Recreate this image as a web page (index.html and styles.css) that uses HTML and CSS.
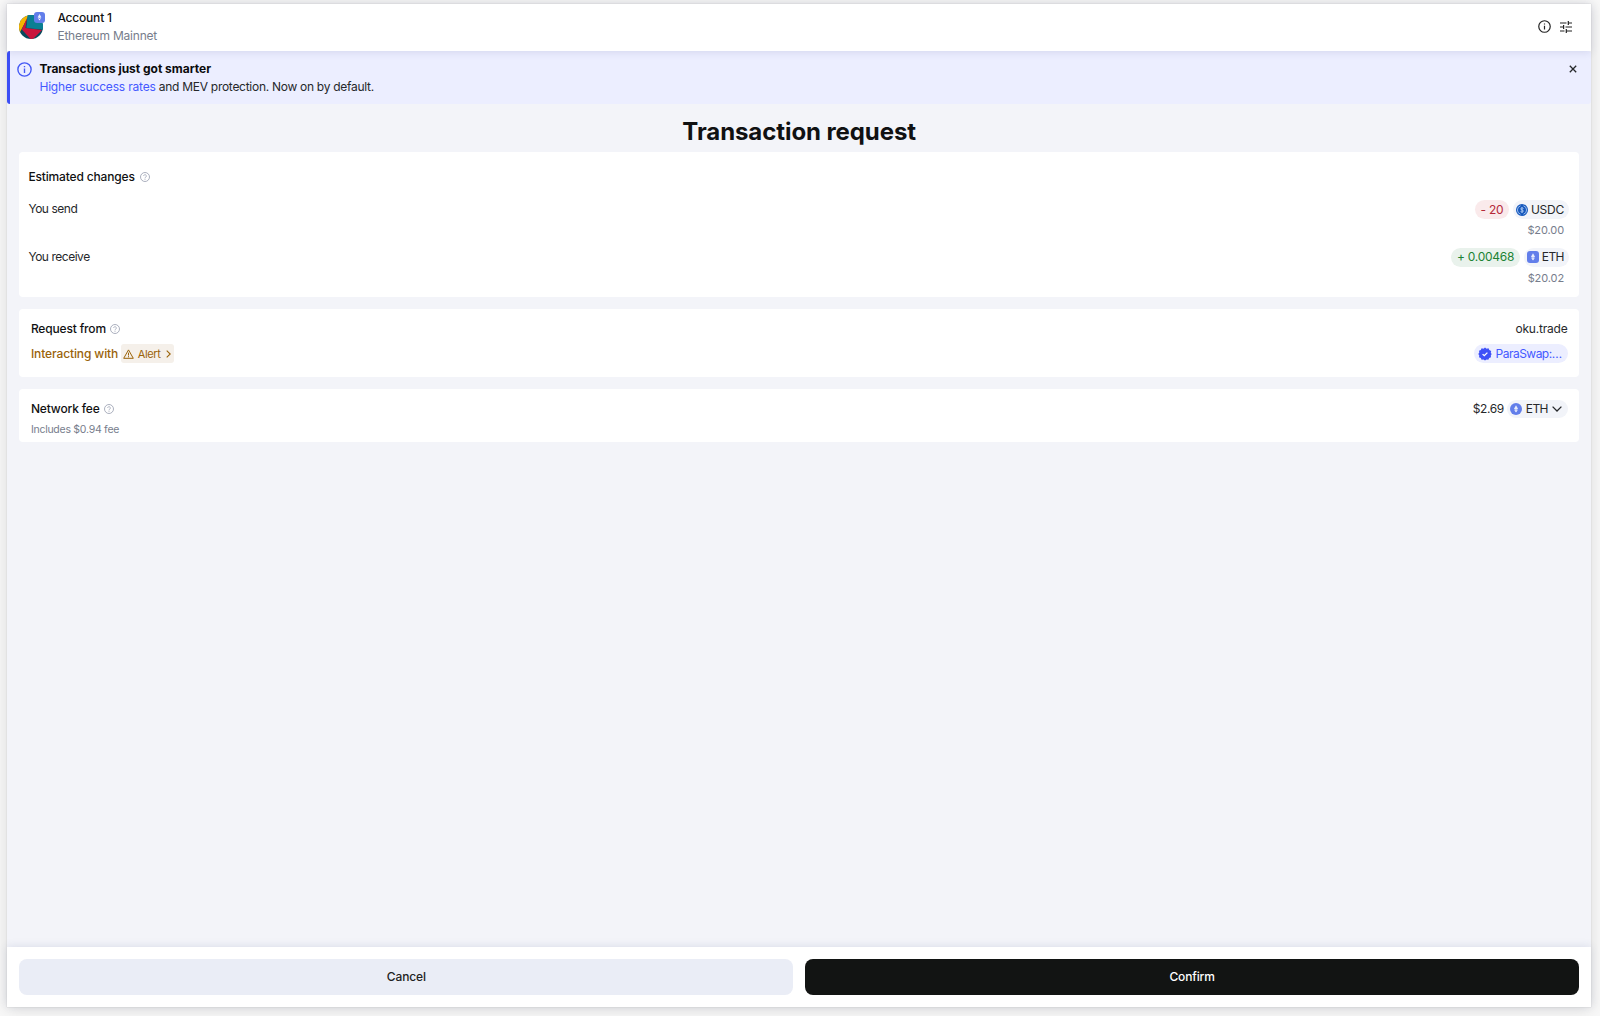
FILE: index.html
```html
<!DOCTYPE html>
<html lang="en">
<head>
<meta charset="utf-8">
<title>Transaction request</title>
<link rel="stylesheet" href="styles.css">
</head>
<body>
<svg class="defs" aria-hidden="true">
  <symbol id="info" viewBox="0 0 24 24"><circle cx="12" cy="12" r="10.6" fill="none" stroke="currentColor" stroke-width="2.200"/><path d="M12 10.500v7M12 6.300v2.200" stroke="currentColor" stroke-width="2.200"/></symbol>
  <symbol id="help" viewBox="0 0 24 24"><circle cx="12" cy="12" r="10.8" fill="none" stroke="currentColor" stroke-width="2.200"/><path d="M8.800 9.600a3.200 3.200 0 1 1 5.200 2.500c-1.300 1-2 1.400-2 3M12 16.600v2.100" fill="none" stroke="currentColor" stroke-width="2.100"/></symbol>
  <symbol id="eth" viewBox="0 0 12 12"><path d="M6 2.200 8 5.700 6 6.900 4 5.700z" fill="#fff" opacity=".85"/><path d="M4 6.400 6 9.400l2-3-2 1.200z" fill="#fff"/></symbol>
</svg>
<main class="panel">
  <header class="topbar">
    <div class="avatar">
      <svg viewBox="0 0 24 24" width="24" height="24"><defs><clipPath id="disc"><circle cx="12" cy="12" r="12"/></clipPath></defs>
        <g clip-path="url(#disc)"><path d="M0 0h24v24H0z" fill="#074a5c"/><path d="M0 0h10L0 19z" fill="#f5b400"/><path d="M8.500 0H24v14.500L7.500 13z" fill="#0a7f93"/><path d="M8 3 6.500 13 23 15 14 24H11.500L2.800 14.500z" fill="#c8143c"/><path d="M9 0H24v14.300L7.600 12.500z" fill="#0a7f93"/></g></svg>
      <span class="network"><svg width="11" height="11"><use href="#eth"/></svg></span>
    </div>
    <div class="account"><div class="name">Account 1</div><div class="chain">Ethereum Mainnet</div></div>
    <div class="tools">
      <svg width="13" height="13"><use href="#info"/></svg>
      <svg width="12" height="12" viewBox="0 0 12 12" fill="none" stroke="currentColor" stroke-width="1.200"><path d="M0 2h6.500M8.500 2H12M8.300 0v4M0 6h3.500M5.500 6H12M3.600 4v4M0 10h4.500M6.500 10H12M6.300 8v4"/></svg>
    </div>
  </header>
  <section class="banner">
    <svg class="banner-icon" width="15" height="15"><use href="#info"/></svg>
    <div class="banner-text"><div class="banner-title">Transactions just got smarter</div><div class="banner-line"><a>Higher success rates</a><span> and MEV protection. Now on by default.</span></div></div>
    <svg class="close" width="8" height="8" viewBox="0 0 8 8"><path d="M.8.8l6.400 6.400M7.200.8.8 7.200" stroke="currentColor" stroke-width="1.300"/></svg>
  </section>
  <h1 class="title">Transaction request</h1>
  <div class="cards">
    <section class="card changes">
      <div class="row heading"><span class="label">Estimated changes</span><svg class="help" width="10" height="10"><use href="#help"/></svg></div>
      <div class="row"><span class="side">You send</span><div class="amounts"><span class="pill minus">- 20</span><span class="pill token"><svg width="12" height="12" viewBox="0 0 12 12"><circle cx="6" cy="6" r="6" fill="#1659bd"/><path d="M4.500 1.800a4.400 4.400 0 0 0 0 8.400M7.500 1.800a4.400 4.400 0 0 1 0 8.400M7.400 4.600C7 3.500 4.700 3.700 4.700 4.900c0 1.400 2.700.7 2.700 2.100C7.400 8.300 5 8.500 4.600 7.300M6 3v6" fill="none" stroke="#cfe2ff" stroke-width=".7"/></svg><span>USDC</span></span></div></div>
      <div class="fiat">$20.00</div>
      <div class="row"><span class="side">You receive</span><div class="amounts"><span class="pill plus">+ 0.00468</span><span class="pill token"><svg class="eth square" width="12" height="12"><use href="#eth"/></svg><span class="symbol">ETH</span></span></div></div>
      <div class="fiat">$20.02</div>
    </section>
    <section class="card request">
      <div class="row"><div class="group"><span class="label from">Request from</span><svg class="help near" width="10" height="10"><use href="#help"/></svg></div><span class="origin">oku.trade</span></div>
      <div class="row second"><div class="group warn"><span class="interacting">Interacting with</span><span class="alert"><svg width="11" height="10" viewBox="0 0 11 10"><path d="M5.500.9 10.300 9.300H.7zM5.500 3.700v2.800M5.500 7.200v1.100" fill="none" stroke="currentColor"/></svg><span>Alert</span><svg class="chevron" width="5" height="8" viewBox="0 0 5 8"><path d="M.7.700 4.200 4 .7 7.300" fill="none" stroke="currentColor" stroke-width="1.100"/></svg></span></div>
        <span class="pill verified"><svg width="14" height="14" viewBox="0 0 14 14"><path d="M7 .5 8.600 1.700 10.500 1.300 11.300 3.100 13.200 3.900 12.800 5.700 13.700 7 12.800 8.500 13 10.300 11.200 11 10.300 12.800 8.500 12.400 7 13.500 5.500 12.400 3.600 12.700 2.800 11 1 10.200 1.300 8.400.3 7 1.300 5.500 1 3.700 2.800 3 3.600 1.300 5.500 1.700z" fill="#3f51f7"/><path d="M4.600 7.100 6.300 8.700 9.400 5.600" fill="none" stroke="#fff" stroke-width="1.300"/></svg><span>ParaSwap:…</span></span></div>
    </section>
    <section class="card fee">
      <div class="row"><div class="group"><span class="label">Network fee</span><svg class="help near" width="10" height="10"><use href="#help"/></svg></div>
        <div class="amounts"><span class="cost">$2.69</span><span class="pill token gas"><svg class="eth" width="12" height="12"><use href="#eth"/></svg><span class="symbol">ETH</span><svg width="10" height="6" viewBox="0 0 10 6"><path d="M.6.600 5 5 9.400.6" fill="none" stroke="currentColor" stroke-width="1.300"/></svg></span></div></div>
      <div class="includes">Includes $0.94 fee</div>
    </section>
  </div>
  <footer class="actions"><button class="btn cancel">Cancel</button><button class="btn confirm">Confirm</button></footer>
</main>
</body>
</html>
```
FILE: styles.css
```css
* { box-sizing: border-box; }
body { margin: 0; height: 1016px; padding: 4px 9px 9px 7.4px; background: #f8f8f8; font: 12px/18px Inter, "Liberation Sans", sans-serif; color: #26282b; overflow: hidden; }
svg { display: block; flex: none; }
.defs { display: none; }
.panel { height: 1003px; display: flex; flex-direction: column; background: #f3f4f9; box-shadow: 0 0 1px #bbb, 0 2px 16px rgba(0,0,0,.12); }
.topbar { height: 47px; flex: none; display: flex; align-items: center; padding: 0 19px 1px 12px; background: #fff; box-shadow: 0 1px 8px rgba(60,70,130,.15); position: relative; }
.avatar { position: relative; width: 24px; margin-right: 14px; }
.network { position: absolute; top: -3px; left: 15px; width: 11px; height: 11px; border-radius: 3px; background: #627eea; }
.name { color: #111; font-weight: 500; letter-spacing: -.2px; }
.chain { color: #777d8c; letter-spacing: -.22px; }
.tools { margin: -1px 0 0 auto; display: flex; align-items: center; gap: 9px; color: #222; }
.banner { height: 53.4px; flex: none; display: flex; padding: 9px 14px 0 7px; border-left: 3px solid #3d4ff5; background: #eceeff; border-radius: 3px; }
.banner-icon { color: #4459f5; margin-top: 1.5px; }
.banner-text { margin-left: 7px; }
.banner-title { color: #0b0b0c; font-weight: 700; letter-spacing: -.02px; }
.banner-line { letter-spacing: -.28px; }
.banner-line a { color: #4459ff; letter-spacing: -.17px; }
.close { margin: 5px 0 0 auto; }
.title { margin: 11.6px 0 5px; text-align: center; font-size: 24px; line-height: 31px; font-weight: 700; letter-spacing: -.08px; color: #101112; }
.cards { padding: 0 12px; display: flex; flex-direction: column; gap: 12px; }
.card { background: #fff; border-radius: 4px; }
.row { display: flex; align-items: center; justify-content: space-between; }
.label { color: #101112; font-weight: 500; letter-spacing: -.16px; }
.from { letter-spacing: -.16px; }
.help { color: #a3a8b8; margin-left: 5px; }
.near { margin-left: 4px; }
.group, .amounts { display: flex; align-items: center; }
.changes { height: 145px; padding: 16px 10px 0 9px; }
.heading { justify-content: flex-start; margin-bottom: 14.5px; }
.changes .row:not(.heading) { height: 19px; }
.side { margin-top: -1px; letter-spacing: -.47px; }
.pill { display: inline-flex; align-items: center; height: 19px; border-radius: 10px; padding: 0 6px; letter-spacing: -.24px; }
.token { background: #f2f4f9; padding: 0 5px 0 3px; gap: 3px; margin-left: 3.5px; }
.symbol { letter-spacing: -.55px; }
.minus { color: #b52838; background: #faeaeb; }
.plus { color: #1c8234; background: #e9f2ec; }
.eth { background: #627eea; border-radius: 50%; }
.eth.square { border-radius: 3px; }
.fiat { height: 28.5px; line-height: 23px; padding-right: 5px; text-align: right; font-size: 11px; letter-spacing: -.1px; color: #777d8c; }
.request { height: 68px; padding: 11px 11.5px 0; }
.second { margin-top: 6px; height: 20px; }
.origin { letter-spacing: -.2px; }
.warn { color: #9a6309; }
.interacting { font-weight: 500; letter-spacing: -.11px; }
.alert { display: flex; align-items: center; height: 19px; margin-left: 2.5px; padding: 0 3.5px 0 2px; border-radius: 3px; background: #f5f0ea; font-size: 11px; letter-spacing: -.35px; }
.alert span { margin: 0 5px 0 4px; }
.verified { background: #eceeff; color: #4459ff; padding: 0 6px 0 4px; gap: 4px; letter-spacing: -.52px; }
.fee { height: 53px; padding: 10.6px 11.5px 0; }
.cost { letter-spacing: -.4px; }
.gas { gap: 3.5px; height: 18px; padding-right: 6px; }
.includes { margin-top: 1px; font-size: 10.5px; line-height: 21px; letter-spacing: -.26px; color: #777d8c; }
.actions { margin-top: auto; height: 60px; flex: none; display: flex; gap: 12px; padding: 12px; background: #fff; box-shadow: 0 -1px 8px rgba(60,70,130,.12); }
.btn { flex: 1; height: 36px; border: 0; border-radius: 8px; font: 500 12px/18px Inter, "Liberation Sans", sans-serif; letter-spacing: -.15px; }
.cancel { background: #eaedf6; color: #222; }
.confirm { background: #121413; color: #fff; }
```
